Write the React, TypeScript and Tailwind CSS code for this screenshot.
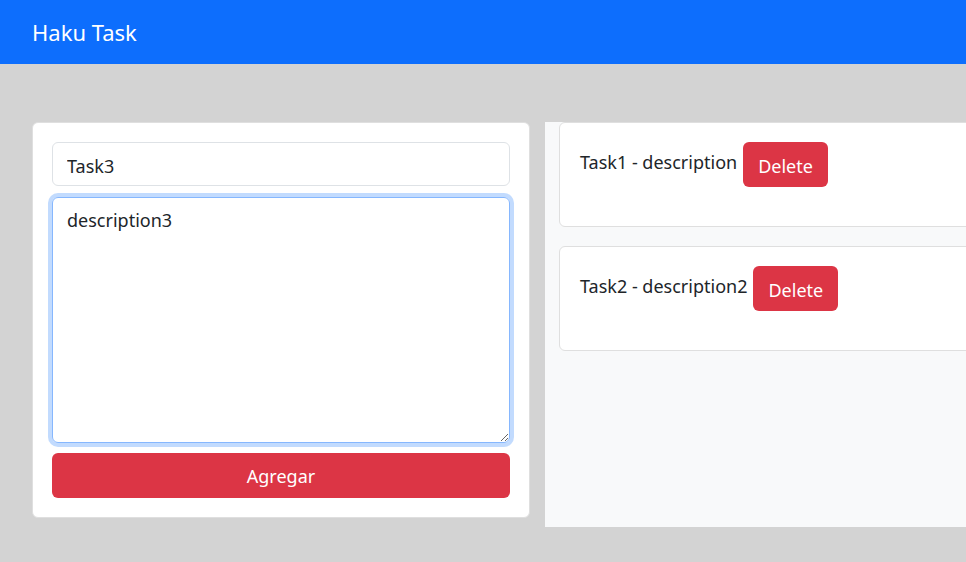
export default function App() {
  const tasks = [
    { id: 1, title: 'Task1', description: 'description' },
    { id: 2, title: 'Task2', description: 'description2' },
  ];

  return (
    <div className="min-h-screen w-full overflow-hidden bg-[#d3d3d3] text-[#212529] font-['Noto_Sans',sans-serif]">
      {/* Navbar */}
      <nav className="h-16 bg-[#0d6efd] flex items-center px-8">
        <span className="text-white text-[22px] leading-none">Haku Task</span>
      </nav>

      <div className="flex items-start gap-[15px] pt-[58px] pl-8">
        {/* Form */}
        <div className="w-[498px] shrink-0 bg-white border border-[#dfdfdf] rounded-md px-[19px] pt-[19px] pb-[19px] flex flex-col">
          <input
            defaultValue="Task3"
            className="h-[44px] w-full border border-[#dee2e6] rounded-md px-[14px] pt-[3px] text-[18px] outline-none"
          />
          <textarea
            defaultValue="description3"
            className="mt-[11px] h-[246px] w-full border border-[#86b7fe] rounded-md px-[14px] pt-[9px] pb-[8px] text-[18px] outline-none shadow-[0_0_0_4px_rgba(13,110,253,0.25)]"
          />
          <button className="mt-[10px] h-[45px] w-full bg-[#dc3545] text-white text-[18px] pt-0.5 rounded-md">
            Agregar
          </button>
        </div>

        {/* Task list */}
        <div className="w-[620px] shrink-0 h-[405px] bg-[#f8f9fa] px-[14px] flex flex-col gap-[19px]">
          {tasks.map(task => (
            <div key={task.id} className="bg-white border border-[#dfdfdf] rounded-md pt-[19px] pb-[39px] px-5 flex items-start gap-[6px]">
              <span className="mt-2 text-[18px] leading-6">
                {task.title} - {task.description}
              </span>
              <button className="h-[45px] px-[15px] pt-[3px] bg-[#dc3545] text-white text-[18px] rounded-md">
                Delete
              </button>
            </div>
          ))}
        </div>
      </div>
    </div>
  );
}
